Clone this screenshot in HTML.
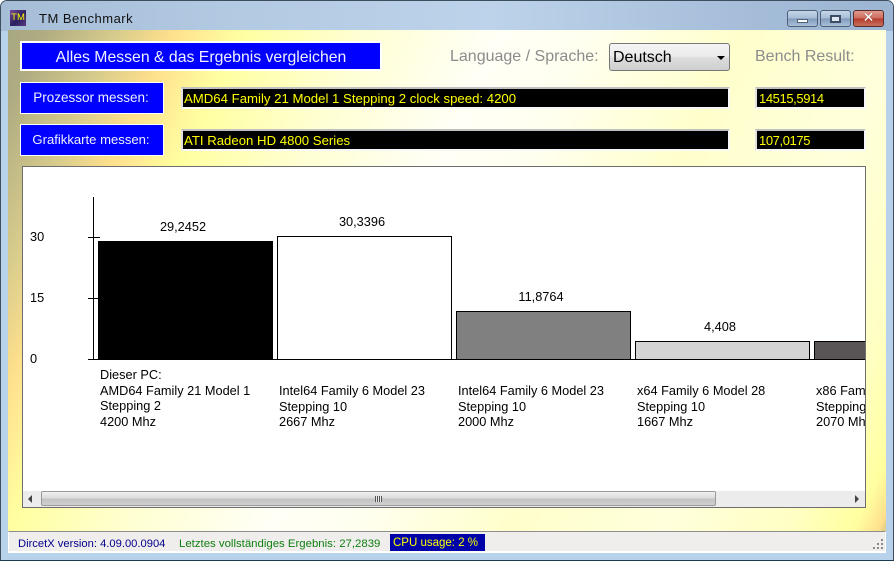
<!DOCTYPE html>
<html><head><meta charset="utf-8">
<style>
html,body{margin:0;padding:0;background:#fff}
#w{position:relative;width:894px;height:561px;overflow:hidden;font-family:"Liberation Sans",sans-serif;background:#b8d2ec;border-radius:7px 7px 0 0;box-sizing:border-box;border:1px solid #3d4f5f;border-bottom:1px solid #1a3a50}
#w *{position:absolute;box-sizing:border-box;white-space:nowrap}
#tb{left:0;top:0;width:892px;height:30px;background:linear-gradient(90deg,#a6bdd8 0%,#b2c9e2 25%,#bcd3ea 55%,#a4bcd8 85%,#9cb5d2 100%)}
#client{left:7px;top:29px;width:878px;height:502px;background:
 linear-gradient(115deg,#a8a880 0%,#aeab82 3%,#d8cc8c 10%,#ffe08c 15%,#ffffa0 21%,#ffffd0 31%,#fffff6 44%,#fffff0 52%,#ffffcc 66%,#ffffdc 80%,#ffffc4 91%,#ffffa0 97%,#ffe08c 99.2%,#d8c888 100%)}
.btn{background:#0000ff;border:1px solid #fff;color:#f0f0ff;text-align:center}
.fld{background:#000;border:2px solid;border-color:#c0c0c0 #f8f8f8 #f8f8f8 #e0e0e0;color:#ff0;font-size:13.2px;line-height:19px;padding-left:1px}
.res{font-size:13px;padding-left:2px;letter-spacing:-.4px}
.lbl{color:#8c8c8c;font-size:16px;line-height:18px}
.c{font-size:12.75px;line-height:15.5px;color:#000}
.v{font-size:12.75px;color:#000;text-align:center;line-height:14px}
.bar{border:1px solid #000}
</style></head><body>
<div id="w">
<div id="tb"></div>
<div style="left:9px;top:9px;width:16px;height:16px;background:linear-gradient(135deg,#7a4a9a,#2a2060 55%,#5a3a80);color:#ff0;font-size:9.5px;line-height:16px;text-align:center">TM</div>
<div style="left:38px;top:11px;font-size:13px;letter-spacing:.5px;line-height:14px;color:#111">TM Benchmark</div>

<div style="left:786px;top:9px;width:31px;height:17px;border:1px solid #4d6078;border-radius:3px;background:linear-gradient(#c6d6e8 0,#a5bbd4 50%,#7f9aba 51%,#a9c0d8 100%)"><div style="left:9px;top:8px;width:11px;height:4px;background:#fff;border:1px solid #50627a"></div></div>
<div style="left:819px;top:9px;width:31px;height:17px;border:1px solid #4d6078;border-radius:3px;background:linear-gradient(#c6d6e8 0,#a5bbd4 50%,#7f9aba 51%,#a9c0d8 100%)"><div style="left:9px;top:4px;width:11px;height:8px;border:2px solid #3d4d63;background:#dfe8f2"></div></div>
<div style="left:852px;top:9px;width:31px;height:17px;border:1px solid #5a2a2a;border-radius:3px;background:linear-gradient(#e09a8c 0,#cc6a5c 50%,#b43a2c 51%,#c8705c 100%)"><div style="left:0;top:0;width:29px;height:15px;color:#fff;font:bold 14px/15px 'DejaVu Sans',sans-serif;text-align:center;text-shadow:0 0 1px #5a2a2a">✕</div></div>

<div id="client">
 <div class="btn" style="left:12px;top:11px;width:362px;height:30px;border-width:2px;font-size:15.8px;line-height:29px">Alles Messen &amp; das Ergebnis vergleichen</div>
 <div class="lbl" style="left:442px;top:18px">Language / Sprache:</div>
 <div style="left:601px;top:13px;width:121px;height:28px;border:1px solid #777;border-radius:3px;background:linear-gradient(#f4f4f4,#ececec 45%,#dcdcdc 55%,#cfcfcf);font-size:16px;line-height:28px;padding-left:3px;color:#000">Deutsch<div style="left:107px;top:12px;width:0;height:0;border:4px solid transparent;border-top-color:#000;border-bottom:0"></div></div>
 <div class="lbl" style="left:747px;top:18px">Bench Result:</div>

 <div class="btn" style="left:12px;top:52px;width:144px;height:32px;font-size:13.5px;line-height:30px;padding-right:2px">Prozessor messen:</div>
 <div class="fld" style="left:173px;top:57px;width:549px;height:22px">AMD64 Family 21 Model 1 Stepping 2 clock speed: 4200</div>
 <div class="fld res" style="left:747px;top:57px;width:111px;height:22px">14515,5914</div>

 <div class="btn" style="left:12px;top:94px;width:144px;height:32px;font-size:13.1px;line-height:30px;padding-right:2px">Grafikkarte messen:</div>
 <div class="fld" style="left:173px;top:99px;width:549px;height:22px">ATI Radeon HD 4800 Series</div>
 <div class="fld res" style="left:747px;top:99px;width:111px;height:22px">107,0175</div>

 <div style="left:14px;top:136px;width:844px;height:342px;background:#fff;border:1px solid #6e6e6e;overflow:hidden">
  <div style="left:70px;top:30px;width:1px;height:163px;background:#000"></div>
  <div style="left:65px;top:70px;width:12px;height:1px;background:#000"></div>
  <div style="left:65px;top:131px;width:12px;height:1px;background:#000"></div>
  <div style="left:65px;top:192px;width:790px;height:1px;background:#000"></div>
  <div class="c" style="left:7px;top:62px">30</div>
  <div class="c" style="left:7px;top:123px">15</div>
  <div class="c" style="left:7px;top:184px">0</div>

  <div class="bar" style="left:75px;top:74px;width:175px;height:119px;background:#000"></div>
  <div class="bar" style="left:254px;top:69px;width:175px;height:124px;background:#fff"></div>
  <div class="bar" style="left:433px;top:144px;width:175px;height:49px;background:#808080"></div>
  <div class="bar" style="left:612px;top:174px;width:175px;height:19px;background:#d3d3d3"></div>
  <div class="bar" style="left:791px;top:174px;width:175px;height:19px;background:#595556"></div>

  <div class="v" style="left:75px;top:53px;width:170px">29,2452</div>
  <div class="v" style="left:254px;top:48px;width:170px">30,3396</div>
  <div class="v" style="left:433px;top:123px;width:170px">11,8764</div>
  <div class="v" style="left:612px;top:153px;width:170px">4,408</div>

  <div class="c" style="left:77px;top:200px">Dieser PC:<br>AMD64 Family 21 Model 1<br>Stepping 2<br>4200 Mhz</div>
  <div class="c" style="left:256px;top:216px">Intel64 Family 6 Model 23<br>Stepping 10<br>2667 Mhz</div>
  <div class="c" style="left:435px;top:216px">Intel64 Family 6 Model 23<br>Stepping 10<br>2000 Mhz</div>
  <div class="c" style="left:614px;top:216px">x64 Family 6 Model 28<br>Stepping 10<br>1667 Mhz</div>
  <div class="c" style="left:793px;top:216px">x86 Family 6 Model 23<br>Stepping 10<br>2070 Mhz</div>

  <div style="left:0;top:324px;width:842px;height:16px;background:#ececec">
   <div style="left:5px;top:4px;width:0;height:0;border:4px solid transparent;border-right-color:#444;border-left:0"></div>
   <div style="left:18px;top:0;width:675px;height:15px;border:1px solid #9a9a9a;border-radius:2px;background:linear-gradient(#f0f0f0,#dcdcdc 45%,#c4c4c4 55%,#cfcfcf)">
     <div style="left:333px;top:4px;width:7px;height:6px;background:repeating-linear-gradient(90deg,#555 0 1px,#e8e8e8 1px 2px)"></div>
   </div>
   <div style="left:832px;top:4px;width:0;height:0;border:4px solid transparent;border-left-color:#444;border-right:0"></div>
  </div>
 </div>
</div>

<div style="left:7px;top:530px;width:878px;height:22px;background:#f0eded;border-top:1px solid #8e8e8e;border-bottom:2px solid #fff;border-left:1px solid #fff;border-right:1px solid #fff">
 <div style="left:9px;top:2px;color:#00008b;font-size:11.2px;line-height:20px">DircetX version: 4.09.00.0904</div>
 <div style="left:170px;top:2px;color:#108010;font-size:11.4px;line-height:20px">Letztes vollständiges Ergebnis: 27,2839</div>
 <div style="left:381px;top:2px;width:95px;height:17px;background:#0000a8;color:#ffff00;font-size:11.5px;line-height:19px;padding-left:3px">CPU usage: 2 %</div>
 <div style="left:864px;top:7px;width:10px;height:10px;background:
  linear-gradient(#8a8a8a,#8a8a8a) 8px 0/2px 2px no-repeat,
  linear-gradient(#8a8a8a,#8a8a8a) 4px 4px/2px 2px no-repeat,linear-gradient(#8a8a8a,#8a8a8a) 8px 4px/2px 2px no-repeat,
  linear-gradient(#8a8a8a,#8a8a8a) 0 8px/2px 2px no-repeat,linear-gradient(#8a8a8a,#8a8a8a) 4px 8px/2px 2px no-repeat,linear-gradient(#8a8a8a,#8a8a8a) 8px 8px/2px 2px no-repeat"></div>
</div>
</div>
</body></html>
